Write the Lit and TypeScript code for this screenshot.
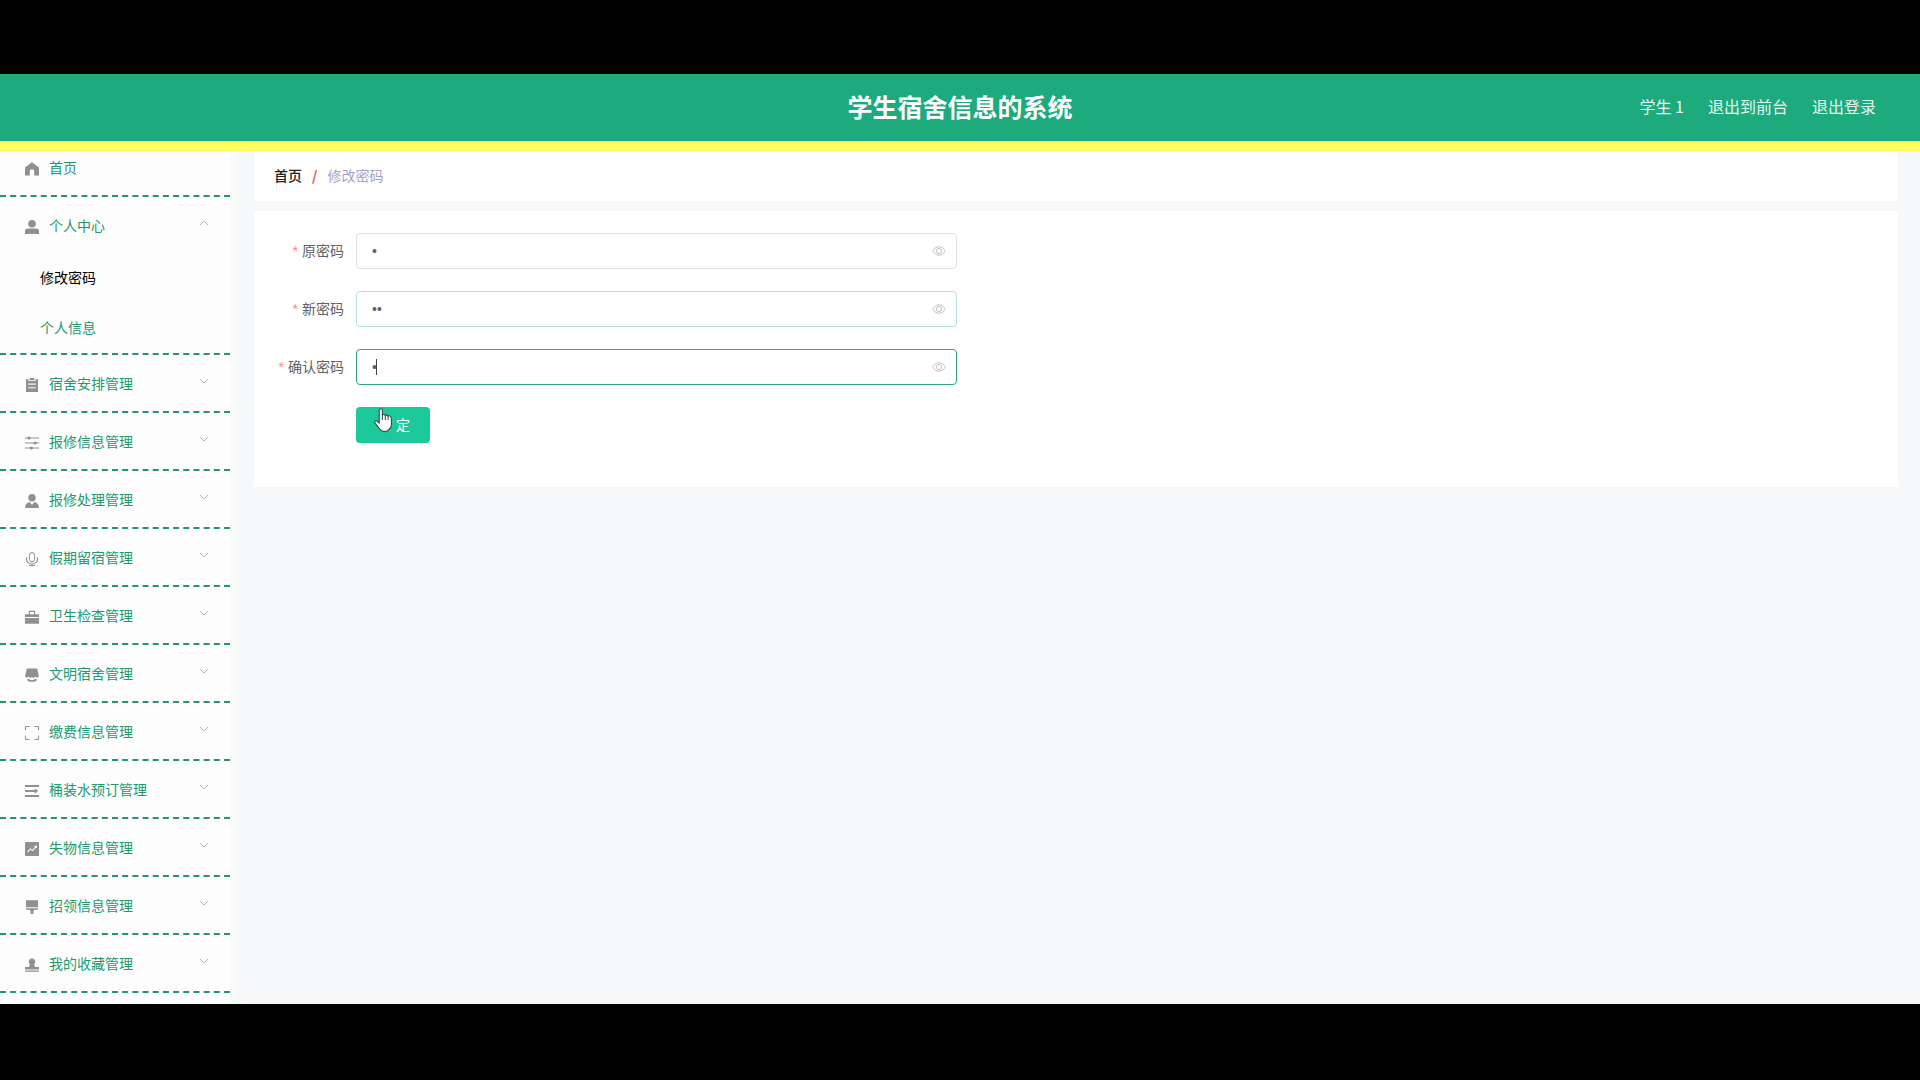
import { LitElement, html, css, svg, TemplateResult } from "lit";
import { customElement, state } from "lit/decorators.js";

const icons: Record<string, TemplateResult> = {
  home: svg`<path d="M7 0.2 L14 5.6 V13.6 H9.2 V9.4 A2.2 2.2 0 0 0 4.8 9.4 V13.6 H0 V5.6 Z"/>`,
  user: svg`<circle cx="7" cy="3.8" r="3.8"/><path d="M0 14 V11.6 Q0 8.6 3 8.6 H11 Q14 8.6 14 11.6 V14 Z"/>`,
  order: svg`<path fill-rule="evenodd" d="M1 1.2 H3.6 V3 H10.4 V1.2 H13 V14 H1 Z M3.2 5.6 V6.7 H10.8 V5.6 Z M3.2 9.2 V10.3 H10.8 V9.2 Z"/><path d="M4.6 0 H9.4 V2.2 H4.6 Z"/>`,
  operation: svg`<path d="M0 1.5 H14 V2.5 H0 Z M0 6.5 H14 V7.5 H0 Z M0 11.5 H14 V12.5 H0 Z"/><circle cx="4" cy="2" r="1.6"/><circle cx="10" cy="7" r="1.6"/><circle cx="6.4" cy="12" r="1.6"/>`,
  custom: svg`<circle cx="7" cy="3.7" r="3.7"/><path d="M0 14 Q0.2 9 4.4 8 L7 10.8 L9.6 8 Q13.8 9 14 14 Z"/>`,
  mic: svg`<g fill="none" stroke="currentColor" stroke-width="1"><rect x="4.4" y="0.5" width="5.2" height="9.4" rx="2.6"/><path d="M1.5 5.4 V7.4 A5.5 4.6 0 0 0 12.5 7.4 V5.4 M7 12 V14 M4 13.6 H10" stroke-width="1.2"/></g>`,
  cooperation: svg`<path d="M0 8 H14 V13.8 H0 Z M0 4.2 H3.8 V0.8 H10.2 V4.2 H14 V7 H0 Z M5 2 V4.2 H9 V2 Z" fill-rule="evenodd"/>`,
  shop: svg`<path d="M1.8 0.4 H12.2 L13.8 8 Q13.6 9.6 12.2 9.6 Q11 9.6 10.4 8.8 Q9.6 9.8 8.6 9.8 Q7.6 9.8 7 8.8 Q6.4 9.8 5.4 9.8 Q4.4 9.8 3.6 8.8 Q3 9.6 1.8 9.6 Q0.4 9.6 0.2 8 Z"/><path d="M2.2 11 Q3 11.2 3.8 10.8 Q5 12.2 7 12.2 Q9 12.2 10.2 10.8 Q11 11.2 11.8 11 Q11.6 13.8 9.6 13.8 H4.4 Q2.4 13.8 2.2 11 Z"/>`,
  scan: svg`<path fill="none" stroke="currentColor" d="M0.5 4.5 V0.5 H4.5 M9.5 0.5 H13.5 V4.5 M13.5 9.5 V13.5 H9.5 M4.5 13.5 H0.5 V9.5"/>`,
  fold: svg`<path d="M0 1 H14 V3 H0 Z M0 6 H9.6 V4.2 L13.2 7 L9.6 9.8 V8 H0 Z M0 11 H14 V13 H0 Z"/>`,
  marketing: svg`<rect width="14" height="14" rx="0.4"/><path fill="none" stroke="#fff" stroke-width="1.1" d="M2.6 10.2 L5.4 7 L7.6 8.6 L11.2 4.4 M9.4 4.2 H11.4 V6"/>`,
  platform: svg`<path d="M1 0.2 H13 V7.2 H1 Z M1 8.2 H13 V9.4 L9.2 10 L8.4 11 V14 H5.6 V11 L4.8 10 L1 9.4 Z"/>`,
  stamp: svg`<path d="M7 0.2 A3.7 3.7 0 0 1 9.4 6.2 Q9 8.4 10.4 9 H14 V11.6 H0 V9 H3.6 Q5 8.4 4.6 6.2 A3.7 3.7 0 0 1 7 0.2 Z M0.4 12.6 H13.6 V13.8 H0.4 Z"/>`,
};

interface MenuEntry {
  icon: string;
  label: string;
}

const menu: MenuEntry[] = [
  { icon: "order", label: "宿舍安排管理" },
  { icon: "operation", label: "报修信息管理" },
  { icon: "custom", label: "报修处理管理" },
  { icon: "mic", label: "假期留宿管理" },
  { icon: "cooperation", label: "卫生检查管理" },
  { icon: "shop", label: "文明宿舍管理" },
  { icon: "scan", label: "缴费信息管理" },
  { icon: "fold", label: "桶装水预订管理" },
  { icon: "marketing", label: "失物信息管理" },
  { icon: "platform", label: "招领信息管理" },
  { icon: "stamp", label: "我的收藏管理" },
];

const fields = [
  { id: "old", label: "原密码", value: "1", tone: "" },
  { id: "new", label: "新密码", value: "12", tone: "fading" },
  { id: "confirm", label: "确认密码", value: "1", tone: "active" },
];

@customElement("app-root")
export class AppRoot extends LitElement {
  @state() private open = true;
  @state() private shown = "";

  static styles = css`
    :host {
      display: block;
      background: #000;
      font-family: "Noto Sans CJK SC", sans-serif;
      font-size: 14px;
    }
    * {
      box-sizing: border-box;
    }
    a {
      color: inherit;
      text-decoration: none;
    }
    button,
    input {
      font: inherit;
      margin: 0;
    }
    .screen {
      min-height: 100vh;
      padding: 74px 0 76px;
      display: flex;
      flex-direction: column;
    }
    .header {
      display: grid;
      grid-template-columns: 1fr auto 1fr;
      align-items: center;
      height: 77px;
      padding: 0 44px 4px;
      background: #1daa7d;
      border-bottom: 10px solid #ffff62;
      color: #fff;
    }
    .title {
      grid-column: 2;
      margin: 0;
      font-size: 25px;
      line-height: 36px;
      font-weight: 700;
    }
    .account {
      display: flex;
      justify-content: flex-end;
      gap: 24px;
      font-size: 16px;
      line-height: 24px;
      color: #e6f7f1;
    }
    .body {
      flex: 1;
      display: flex;
      background: #f7f8fa;
      overflow: hidden;
    }
    .side {
      width: 230px;
      margin-top: -12px;
      background: #fdfdfd;
      box-shadow: 0 0 12px rgba(255, 255, 255, 0.9);
      color: #22996f;
    }
    .menu,
    .submenu {
      list-style: none;
      margin: 0;
      padding: 0;
    }
    .group {
      border-bottom: 2px dashed #26936e;
    }
    .row {
      display: flex;
      align-items: center;
      gap: 10px;
      width: 100%;
      height: 56px;
      padding: 0 21px 0 25px;
      border: 0;
      background: none;
      color: inherit;
      text-align: left;
      line-height: 20px;
      cursor: pointer;
    }
    .icon {
      flex: none;
      width: 14px;
      height: 14px;
      margin-top: 4px;
      color: #8f9093;
      fill: currentColor;
    }
    .name {
      flex: 1;
    }
    .arrow {
      width: 10px;
      height: 6px;
      margin-bottom: 4px;
      fill: none;
      stroke: #b4b7bd;
    }
    .sub {
      display: flex;
      align-items: center;
      height: 50px;
      padding: 0 0 2px 40px;
    }
    .sub.current {
      color: #000;
    }
    .main {
      flex: 1;
      min-width: 0;
      padding: 0 22px 0 24px;
      display: flex;
      flex-direction: column;
      gap: 10px;
    }
    .crumbs {
      display: flex;
      align-items: center;
      gap: 10px;
      height: 50px;
      padding: 0 20px 2px;
      background: #fff;
      color: #a5a3c8;
    }
    .crumbs .root {
      color: #222;
      font-weight: 500;
    }
    .slash {
      color: #f0513c;
      font-weight: 700;
    }
    .card {
      display: grid;
      gap: 22px;
      padding: 22px 20px 44px 0;
      background: #fff;
    }
    .field {
      display: grid;
      grid-template-columns: 90px minmax(0, 601px);
      gap: 12px;
      align-items: center;
    }
    .label {
      padding-bottom: 2px;
      text-align: right;
      color: #606266;
    }
    .star {
      margin-right: 4px;
      color: #f78989;
      font-family: "Liberation Sans", sans-serif;
    }
    .control {
      position: relative;
      display: flex;
      align-items: center;
      height: 36px;
      padding: 0 10px 0 15px;
      border: 1px solid #dcdfe6;
      border-radius: 4px;
      background: #fff;
    }
    .control.fading {
      border-color: #b5e2d2;
    }
    .control.active {
      border-color: #35a681;
    }
    .input {
      flex: 1;
      min-width: 0;
      height: 34px;
      padding: 0;
      border: 0;
      outline: 0;
      background: none;
      color: #606266;
      font-family: "Liberation Sans", sans-serif;
    }
    .caret {
      position: absolute;
      left: 19px;
      top: 9px;
      width: 1px;
      height: 16px;
      background: #444;
    }
    .peek {
      display: flex;
      padding: 0;
      border: 0;
      background: none;
      cursor: pointer;
    }
    .eye {
      width: 14px;
      height: 14px;
      fill: none;
      stroke: #c0c4cc;
    }
    .submit {
      grid-column: 2;
      justify-self: start;
      position: relative;
      width: 74px;
      height: 36px;
      padding: 0 20px 2px;
      border: 0;
      border-radius: 4px;
      background: #1bc99b;
      color: #fff;
      text-align: right;
      line-height: 20px;
      cursor: pointer;
    }
    .pointer {
      position: absolute;
      left: 18px;
      top: 1px;
      width: 20px;
      height: 25px;
    }
  `;

  private arrow(up: boolean) {
    return html`<svg class="arrow" viewBox="0 0 10 6" aria-hidden="true">
      <path d=${up ? "M1 5 L5 1 L9 5" : "M1 1 L5 5 L9 1"} />
    </svg>`;
  }

  private icon(name: string) {
    return html`<svg class="icon" viewBox="0 0 14 14" aria-hidden="true">${icons[name]}</svg>`;
  }

  render() {
    return html`
      <div class="screen">
        <header class="header">
          <h1 class="title">学生宿舍信息的系统</h1>
          <nav class="account">
            <span>学生 1</span>
            <a href="#front">退出到前台</a>
            <a href="#logout">退出登录</a>
          </nav>
        </header>
        <div class="body">
          <nav class="side">
            <ul class="menu">
              <li class="group">
                <a class="row" href="#home">${this.icon("home")}<span class="name">首页</span></a>
              </li>
              <li class="group">
                <button class="row" type="button" @click=${() => (this.open = !this.open)}>
                  ${this.icon("user")}<span class="name">个人中心</span>${this.arrow(this.open)}
                </button>
                ${this.open
                  ? html`<ul class="submenu">
                      <li><a class="sub current" href="#password">修改密码</a></li>
                      <li><a class="sub" href="#profile">个人信息</a></li>
                    </ul>`
                  : ""}
              </li>
              ${menu.map(
                (m) => html`<li class="group">
                  <button class="row" type="button">
                    ${this.icon(m.icon)}<span class="name">${m.label}</span>${this.arrow(false)}
                  </button>
                </li>`
              )}
            </ul>
          </nav>
          <main class="main">
            <nav class="crumbs">
              <a class="root" href="#home">首页</a><span class="slash">/</span><span>修改密码</span>
            </nav>
            <form class="card" @submit=${(e: Event) => e.preventDefault()}>
              ${fields.map(
                (f) => html`<div class="field">
                  <label class="label" for=${f.id}><span class="star">*</span>${f.label}</label>
                  <div class="control ${f.tone}">
                    <input
                      class="input"
                      id=${f.id}
                      type=${this.shown === f.id ? "text" : "password"}
                      .value=${f.value}
                    />
                    ${f.tone === "active" ? html`<span class="caret"></span>` : ""}
                    <button
                      class="peek"
                      type="button"
                      aria-label="显示密码"
                      @click=${() => (this.shown = this.shown === f.id ? "" : f.id)}
                    >
                      <svg class="eye" viewBox="0 0 14 14" aria-hidden="true">
                        <path d="M0.6 7 Q3 2.6 7 2.6 Q11 2.6 13.4 7 Q11 11.4 7 11.4 Q3 11.4 0.6 7 Z" />
                        <circle cx="7" cy="7" r="2.6" />
                      </svg>
                    </button>
                  </div>
                </div>`
              )}
              <div class="field">
                <button class="submit" type="submit" aria-label="确定">
                  定
                  <svg class="pointer" viewBox="0 0 20 25" aria-hidden="true">
                    <path
                      fill="#fff"
                      stroke="#2b4a4a"
                      stroke-width="1.1"
                      stroke-linejoin="round"
                      d="M5.2 15.2 V2.2 Q5.3 0.7 6.8 0.7 Q8.3 0.7 8.4 2.2 V7 Q9.9 5.9 11.3 7.4 Q12.8 6.5 14 8 Q16 7.2 17 9 Q17.5 10 17.4 12 V17 Q17.2 19.6 15.2 21.4 Q13.6 23.6 10.6 23.6 Q7.8 23.6 6 21.4 L1 15.2 Q0.2 13.8 1.4 13 Q2.6 12.4 3.6 13.4 Z"
                    />
                    <path fill="none" stroke="#2b4a4a" d="M8.4 7 V12 M11.3 7.4 V12 M14.1 8 V12" />
                  </svg>
                </button>
              </div>
            </form>
          </main>
        </div>
      </div>
    `;
  }
}
